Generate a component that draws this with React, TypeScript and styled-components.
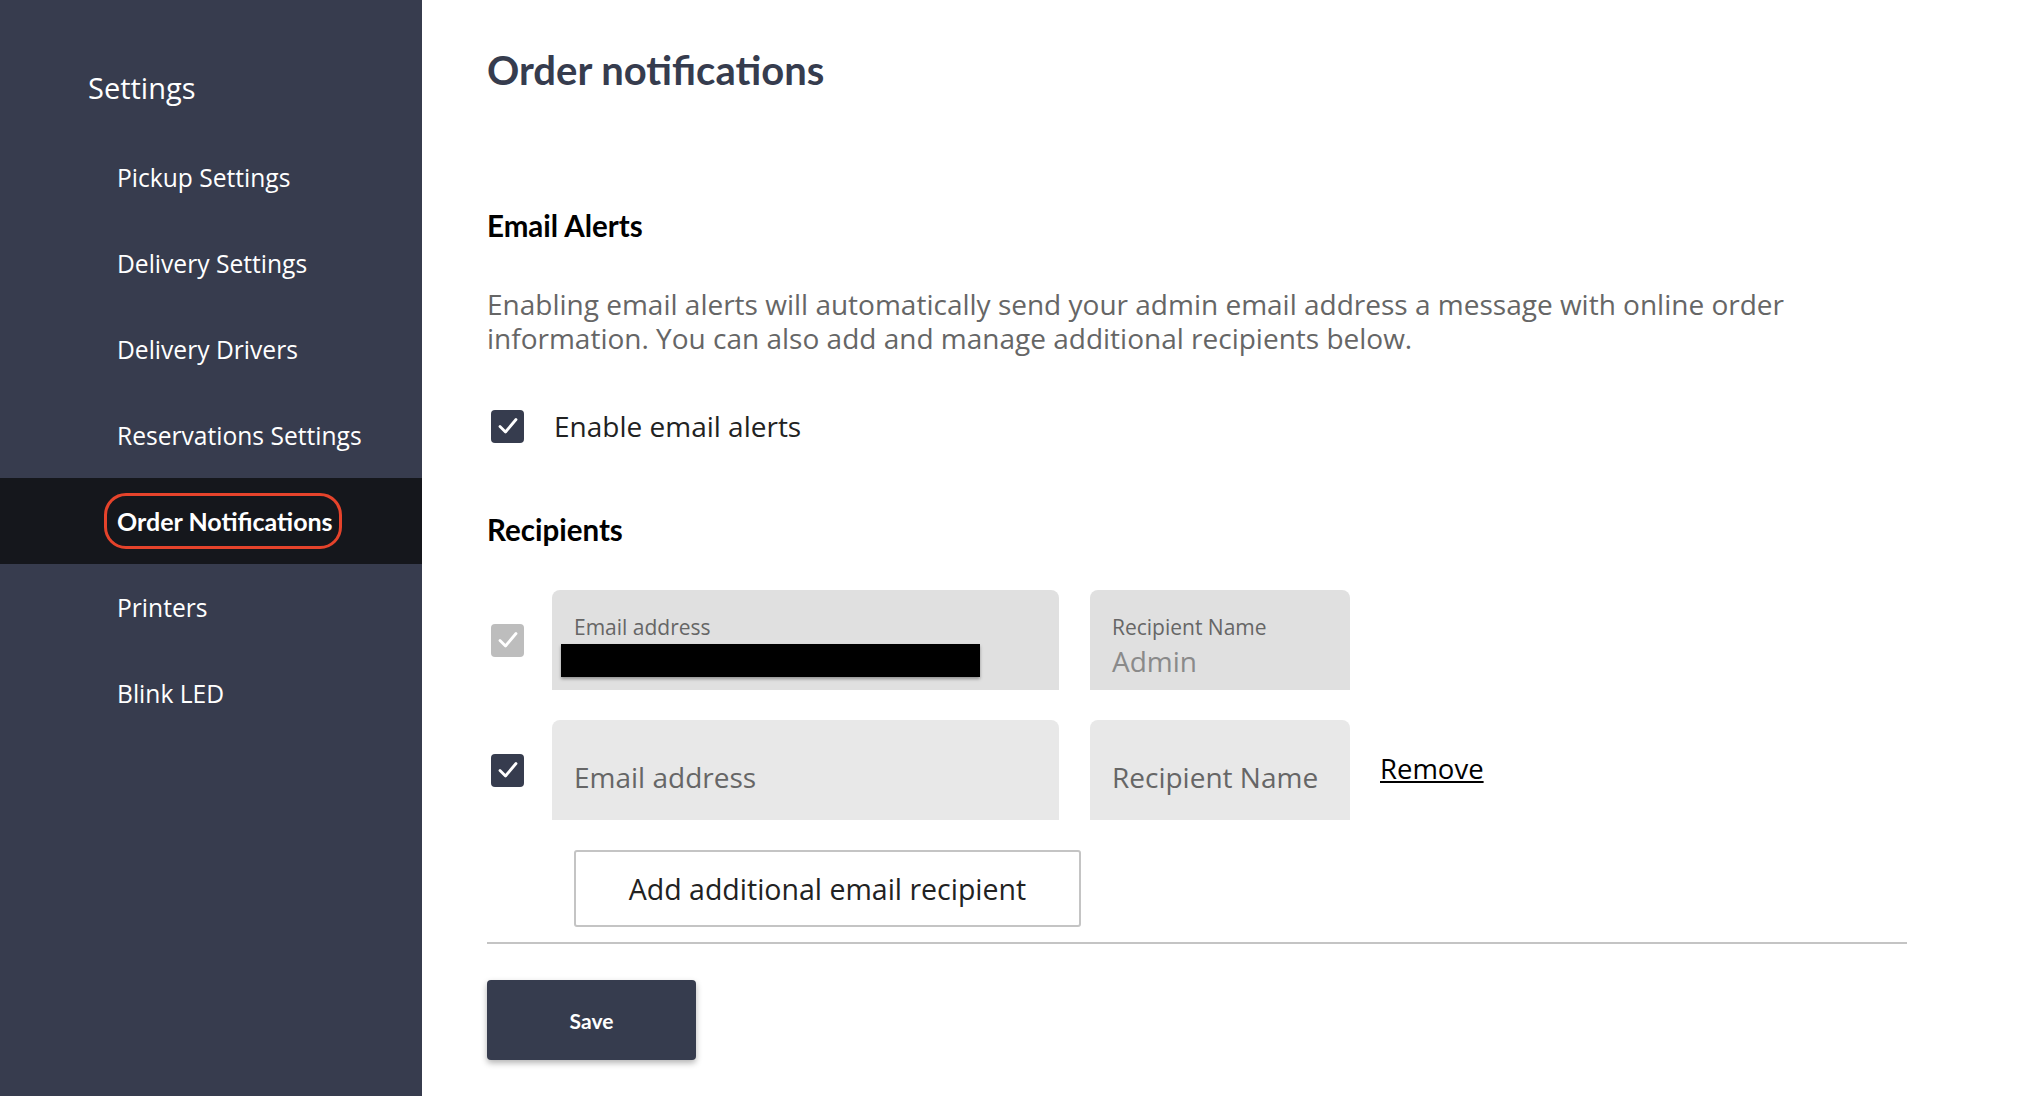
import styled, { createGlobalStyle } from 'styled-components';

const GlobalStyle = createGlobalStyle`
    html, body {
        margin: 0;
        padding: 0;
        background: #ffffff;
    }
    body {
        font-family: "Open Sans", "Noto Sans", "Liberation Sans", sans-serif;
    }
    * {
        box-sizing: border-box;
    }
`

const Page = styled.div`
    display: flex;
    min-height: 1096px;
`

const Sidebar = styled.nav`
    width: 422px;
    flex-shrink: 0;
    background: #373c4e;
    padding-top: 71px;
    display: flex;
    flex-direction: column;
`

const SidebarTitle = styled.div`
    padding-left: 88px;
    font-size: 29px;
    line-height: 34px;
    color: #ffffff;
    margin-bottom: 29px;
`

const NavItem = styled.div<{ $active?: boolean }>`
    height: 86px;
    display: flex;
    align-items: center;
    padding-left: 117px;
    font-size: 24.6px;
    color: #ffffff;
    background: ${p => (p.$active ? '#15171c' : 'transparent')};
    font-weight: ${p => (p.$active ? 700 : 400)};
    cursor: pointer;
`

const FocusRing = styled.span`
    margin-left: -13px;
    padding: 9px 6px 9px 10px;
    border: 3px solid #e5432b;
    border-radius: 22px;
    line-height: 32px;
    font-family: Lato, "Open Sans", sans-serif;
    font-size: 25px;
`

const Main = styled.main`
    flex: 1;
    padding: 46px 0 0 65px;
`

const Content = styled.div`
    width: 1420px;
    display: flex;
    flex-direction: column;
`

const Title = styled.h1`
    margin: 0;
    font-family: Lato, "Open Sans", sans-serif;
    font-size: 40px;
    line-height: 48px;
    font-weight: 700;
    color: #363c4e;
`

const SectionTitle = styled.h2<{ $top: number }>`
    margin: ${p => p.$top}px 0 0;
    font-family: Lato, "Open Sans", sans-serif;
    font-size: 29.5px;
    line-height: 34px;
    font-weight: 700;
    color: #000000;
`

const Paragraph = styled.p`
    margin: 44px 0 0;
    max-width: 1400px;
    font-size: 28px;
    line-height: 34px;
    color: #666666;
`

const CheckRow = styled.label`
    margin-top: 54px;
    display: flex;
    align-items: center;
    gap: 30px;
    height: 34px;
    padding-left: 4px;
    font-size: 28px;
    color: #222222;
`

const Box = styled.span<{ $disabled?: boolean }>`
    width: 33px;
    height: 33px;
    flex-shrink: 0;
    border-radius: 4px;
    background: ${p => (p.$disabled ? '#bdbdbd' : '#363c4e')};
    display: flex;
    align-items: center;
    justify-content: center;
`

const Recipients = styled.div`
    margin-top: 43px;
    display: flex;
    flex-direction: column;
    gap: 30px;
`

const RecipientRow = styled.div`
    display: flex;
    align-items: center;
    padding-left: 4px;
    height: 100px;
`

const Field = styled.div<{ $width: number; $disabled?: boolean; $gap: number }>`
    width: ${p => p.$width}px;
    margin-left: ${p => p.$gap}px;
    height: 100px;
    background: ${p => (p.$disabled ? '#e0e0e0' : '#e8e8e8')};
    border-radius: 8px 8px 0 0;
    padding: ${p => (p.$disabled ? '25px 22px 0' : '0 22px')};
    display: flex;
    flex-direction: column;
    justify-content: ${p => (p.$disabled ? 'flex-start' : 'center')};
`

const FieldLabel = styled.div`
    font-size: 21px;
    line-height: 24px;
    color: #666666;
`

const FieldValue = styled.div`
    margin-top: 5px;
    font-size: 28px;
    line-height: 34px;
    color: #8a8a8a;
`

const Placeholder = styled.div`
    font-size: 28px;
    line-height: 32px;
    color: #666666;
    margin-top: 14px;
`

const Redaction = styled.div`
    margin-left: -13px;
    margin-top: 5px;
    width: 419px;
    height: 33px;
    background: #000000;
    box-shadow: 0 2px 3px rgba(0, 0, 0, 0.35);
`

const RemoveLink = styled.a`
    margin: 0 0 4px 30px;
    font-size: 27.5px;
    color: #000000;
    text-decoration: underline;
    cursor: pointer;
`

const AddButton = styled.button`
    margin: 30px 0 0 87px;
    width: 507px;
    height: 77px;
    background: #ffffff;
    border: 2px solid #c4c4c4;
    border-radius: 3px;
    font-family: inherit;
    font-size: 28.5px;
    color: #222222;
    cursor: pointer;
`

const Divider = styled.hr`
    margin: 15px 0 0;
    border: none;
    height: 2px;
    background: #c4c4c4;
`

const SaveButton = styled.button`
    margin-top: 36px;
    width: 209px;
    height: 80px;
    background: #363c4e;
    border: none;
    border-radius: 4px;
    box-shadow: 0 3px 6px rgba(0, 0, 0, 0.3);
    font-family: Lato, "Open Sans", sans-serif;
    font-size: 21px;
    font-weight: 700;
    color: #ffffff;
    cursor: pointer;
`

const Check = () => (
    <svg width="24" height="24" viewBox="0 0 24 24">
        <path d="M4 12.5 L9.5 18 L20 5.5" fill="none" stroke="#ffffff" strokeWidth="2.8" strokeLinecap="round" strokeLinejoin="round" />
    </svg>
)

const navItems = [
    'Pickup Settings',
    'Delivery Settings',
    'Delivery Drivers',
    'Reservations Settings',
    'Order Notifications',
    'Printers',
    'Blink LED',
]

export default function App() {
    return (
        <>
            <GlobalStyle />
            <Page>
                <Sidebar>
                    <SidebarTitle>Settings</SidebarTitle>
                    {navItems.map(item =>
                        item === 'Order Notifications' ? (
                            <NavItem key={item} $active>
                                <FocusRing>{item}</FocusRing>
                            </NavItem>
                        ) : (
                            <NavItem key={item}>{item}</NavItem>
                        )
                    )}
                </Sidebar>
                <Main>
                    <Content>
                        <Title>Order notifications</Title>
                        <SectionTitle $top={115}>Email Alerts</SectionTitle>
                        <Paragraph>
                            Enabling email alerts will automatically send your admin email address a message with online order information. You can also add and manage additional recipients below.
                        </Paragraph>
                        <CheckRow>
                            <Box><Check /></Box>
                            Enable email alerts
                        </CheckRow>
                        <SectionTitle $top={70}>Recipients</SectionTitle>
                        <Recipients>
                            <RecipientRow>
                                <Box $disabled><Check /></Box>
                                <Field $width={507} $gap={28} $disabled>
                                    <FieldLabel>Email address</FieldLabel>
                                    <Redaction />
                                </Field>
                                <Field $width={260} $gap={31} $disabled>
                                    <FieldLabel>Recipient Name</FieldLabel>
                                    <FieldValue>Admin</FieldValue>
                                </Field>
                            </RecipientRow>
                            <RecipientRow>
                                <Box><Check /></Box>
                                <Field $width={507} $gap={28}>
                                    <Placeholder>Email address</Placeholder>
                                </Field>
                                <Field $width={260} $gap={31}>
                                    <Placeholder>Recipient Name</Placeholder>
                                </Field>
                                <RemoveLink>Remove</RemoveLink>
                            </RecipientRow>
                        </Recipients>
                        <AddButton>Add additional email recipient</AddButton>
                        <Divider />
                        <div>
                            <SaveButton>Save</SaveButton>
                        </div>
                    </Content>
                </Main>
            </Page>
        </>
    )
}
